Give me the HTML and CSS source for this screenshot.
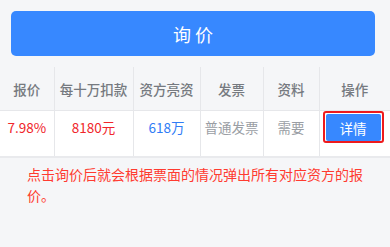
FILE: index.html
```html
<!DOCTYPE html>
<html lang="zh-CN">
<head>
  <meta charset="UTF-8" />
  <meta name="viewport" content="width=device-width, initial-scale=1.0"/>
  <title>询价</title>
  <link rel="stylesheet" href="styles.css">
</head>
<body>

  <div class="top">
    <button class="ask-btn">询价</button>
  </div>

  <table class="quote-table">
    <colgroup>
      <col style="width: 54px">
      <col style="width: 79px">
      <col style="width: 67px">
      <col style="width: 63px">
      <col style="width: 56px">
      <col style="width: 71px">
    </colgroup>
    <thead>
      <tr>
        <th>报价</th>
        <th>每十万扣款</th>
        <th>资方亮资</th>
        <th>发票</th>
        <th>资料</th>
        <th>操作</th>
      </tr>
    </thead>
    <tbody>
      <tr>
        <td class="red">7.98%</td>
        <td class="red">8180元</td>
        <td class="blue">618万</td>
        <td class="gray">普通发票</td>
        <td class="gray">需要</td>
        <td>
          <div class="mark">
            <button class="detail-btn">详情</button>
          </div>
        </td>
      </tr>
    </tbody>
  </table>

  <p class="note">点击询价后就会根据票面的情况弹出所有对应资方的报价。</p>

</body>
</html>
```

FILE: styles.css
```css
body {
  background-color: #f5f6f8;
  font-family: "Noto Sans CJK SC", "Noto Sans", sans-serif;
  margin: 0;
  padding: 0;
}

.top {
  padding: 11px 15px 11px 11px;
}

.ask-btn {
  display: block;
  width: 100%;
  height: 45px;
  border: none;
  border-radius: 5px;
  background-color: #3788ff;
  color: #fff;
  font-family: inherit;
  font-size: 18px;
  letter-spacing: 4px;
  text-indent: 4px;
  cursor: pointer;
}

.quote-table {
  width: 390px;
  table-layout: fixed;
  border-collapse: collapse;
}

.quote-table th,
.quote-table td {
  text-align: center;
  border-left: 1px solid #e6e7ea;
  white-space: nowrap;
}

.quote-table th:first-child,
.quote-table td:first-child {
  border-left: none;
}

.quote-table th {
  height: 43px;
  padding: 0;
  font-size: 13.5px;
  font-weight: 500;
  color: #767a80;
  border-bottom: 1px solid #e6e7ea;
}

.quote-table td {
  background-color: #fff;
  height: 32px;
  padding: 0 0 13px;
  vertical-align: top;
  line-height: 32px;
  font-size: 13.5px;
  border-bottom: 2px solid #e9eaed;
}

.red {
  color: #f0262b;
}

.blue {
  color: #2f7cf6;
}

.gray {
  color: #9a9ea4;
}

.mark {
  width: 57px;
  height: 28px;
  margin-left: 3px;
  border: 2px solid #ee1a1d;
  border-radius: 3px;
  padding: 0;
}

.detail-btn {
  display: block;
  width: 55px;
  height: 27px;
  margin: 1px 1px 0;
  border: none;
  border-radius: 2px;
  background-color: #3788ff;
  color: #fff;
  font-family: inherit;
  font-size: 13.5px;
  padding: 0;
}

.note {
  margin: 6px 0 0;
  padding: 0 10px 0 27px;
  color: #ff3b30;
  font-size: 14px;
  line-height: 21px;
}
```
